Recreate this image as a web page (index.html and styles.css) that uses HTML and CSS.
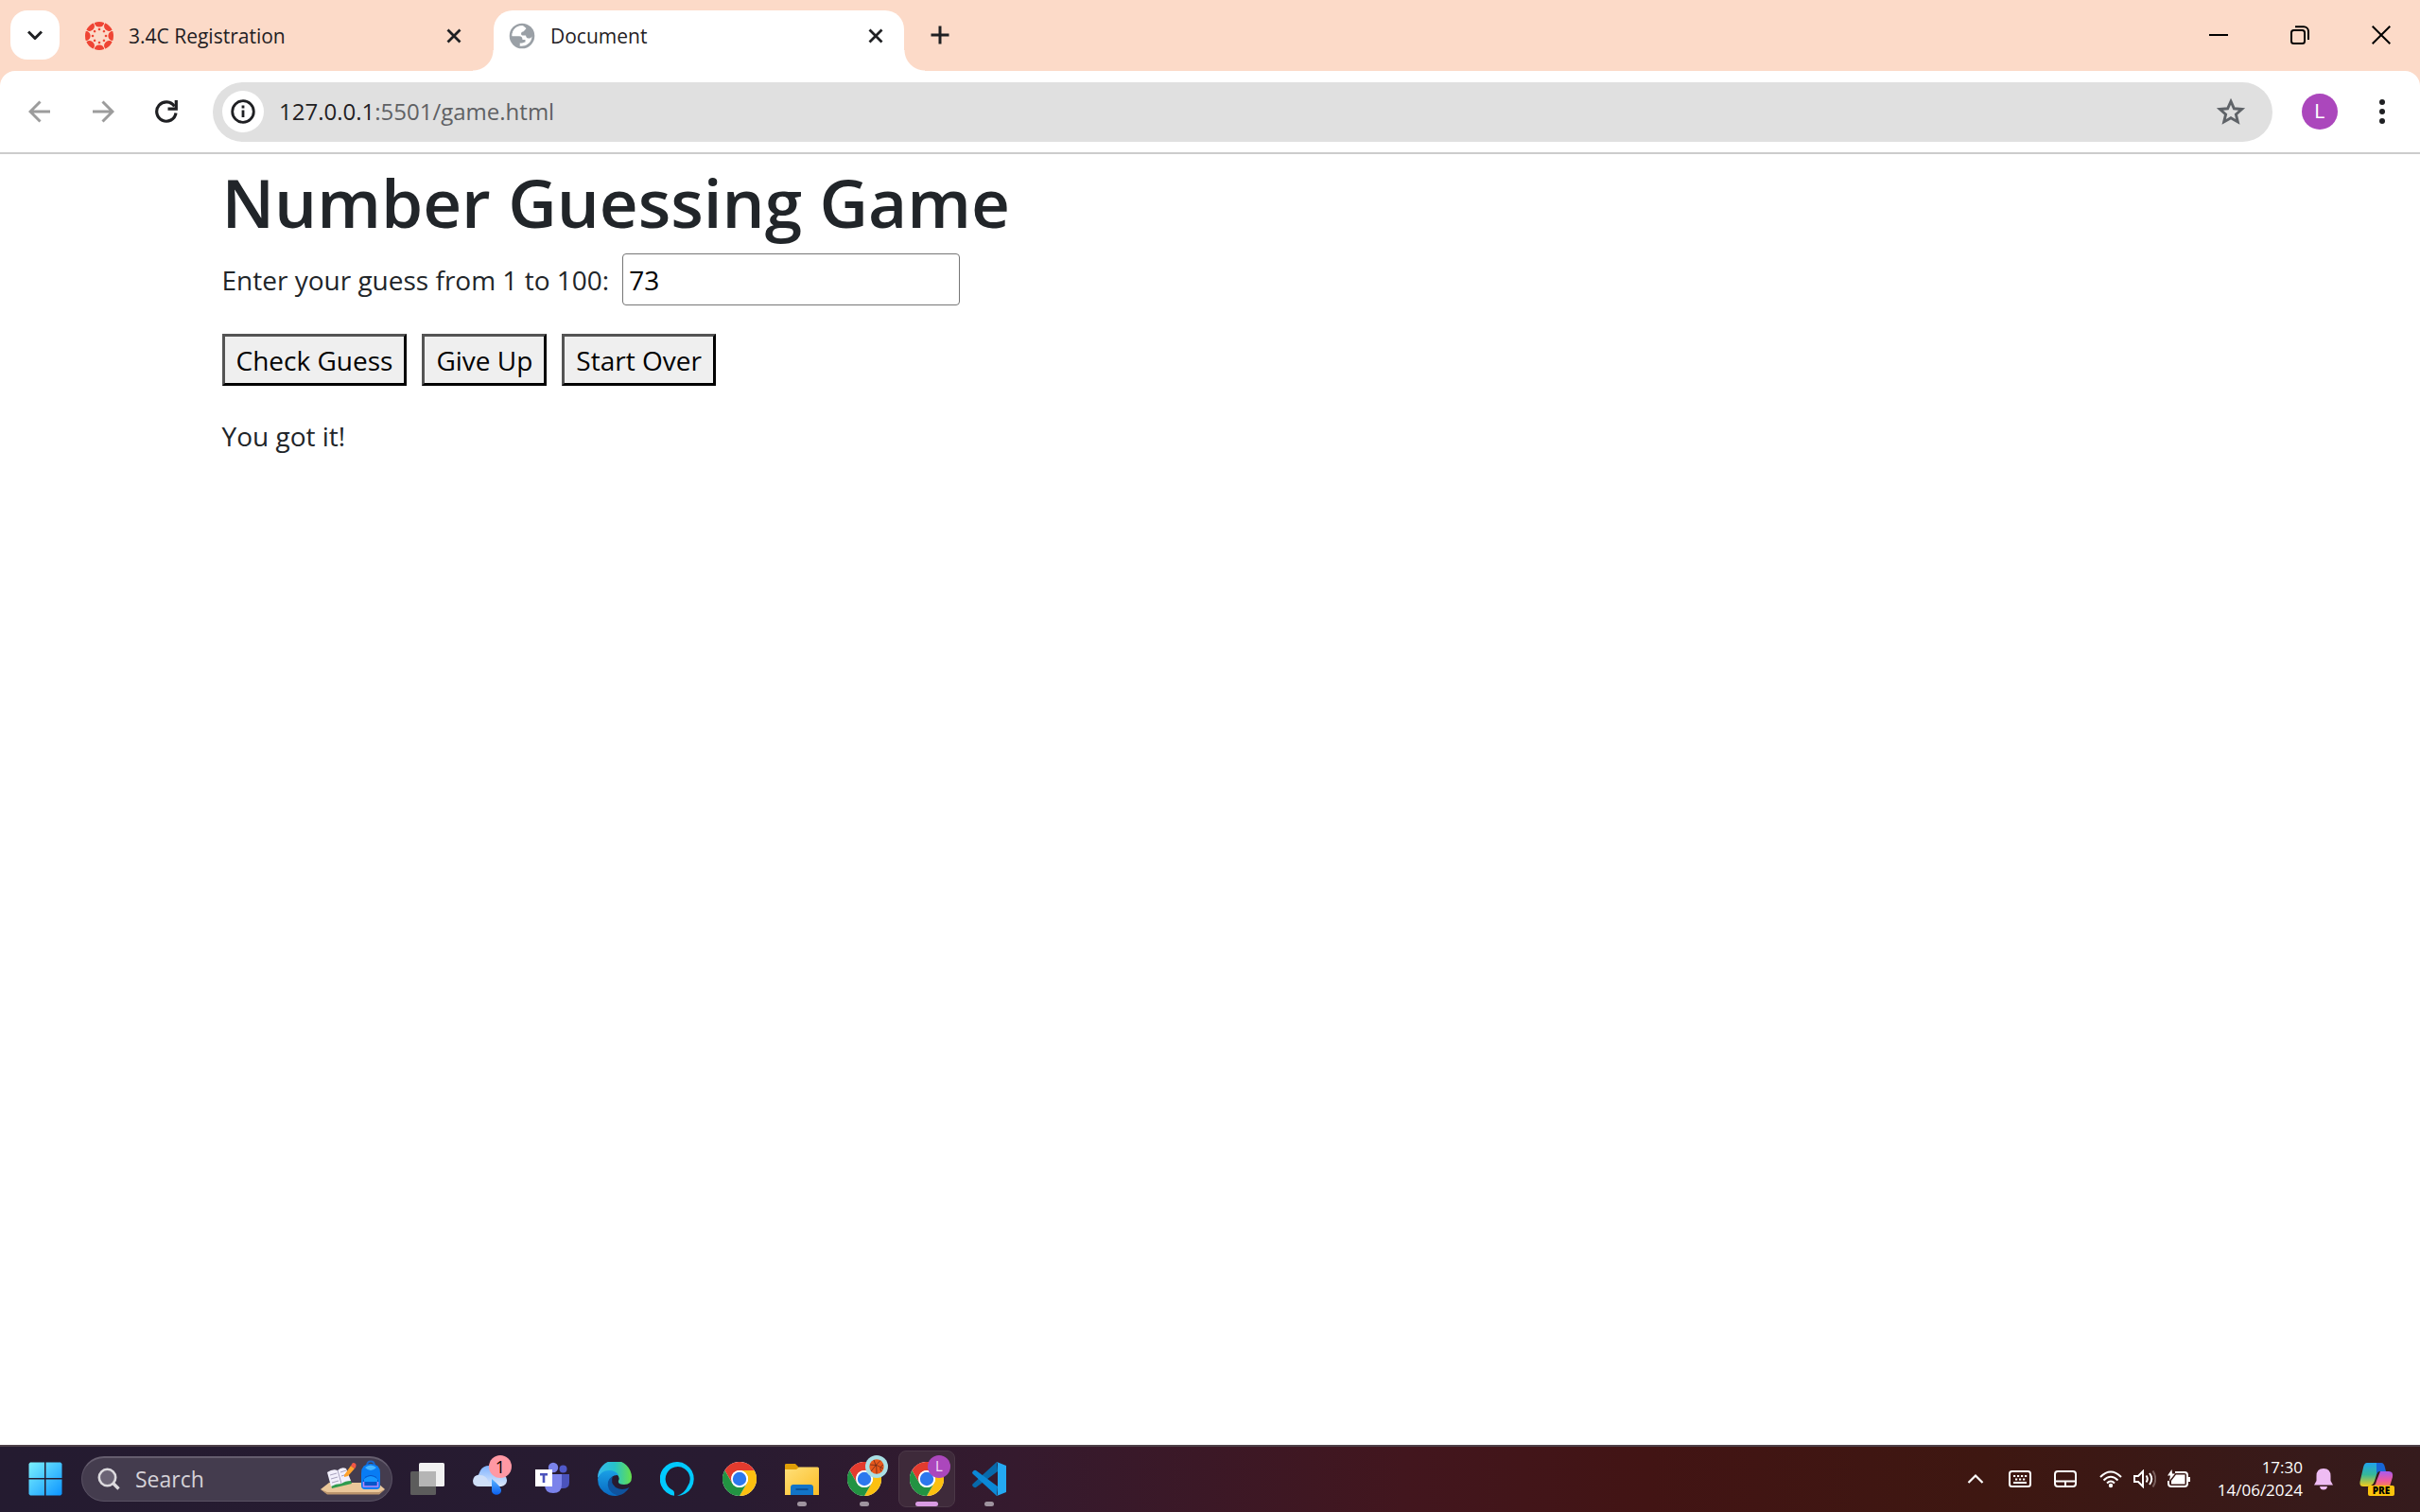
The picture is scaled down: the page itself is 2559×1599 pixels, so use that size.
FILE: index.html
```html
<!DOCTYPE html>
<html lang="en">
<head>
<meta charset="utf-8">
<title>Document</title>
<link rel="stylesheet" href="styles.css">
</head>
<body>
<svg class="defs" width="0" height="0" aria-hidden="true">
  <defs>
    <symbol id="chrome" viewBox="0 0 48 48">
      <circle cx="24" cy="24" r="24" fill="#fff"/>
      <path d="M3.2 12A24 24 0 0 1 44.8 12H24A12 12 0 0 0 13.6 18L13.6 30Z" fill="#e33b2e"/>
      <path d="M44.8 12A24 24 0 0 1 24 48L34.4 30A12 12 0 0 0 34.4 18A12 12 0 0 0 24 12Z" fill="#fcc010"/>
      <path d="M24 48A24 24 0 0 1 3.2 12L13.6 30A12 12 0 0 0 24 36A12 12 0 0 0 34.4 30Z" fill="#229342"/>
      <circle cx="24" cy="24" r="12" fill="#fff"/>
      <circle cx="24" cy="24" r="9.6" fill="#2c78ee"/>
    </symbol>
    <symbol id="close" viewBox="0 0 16 16"><path d="M1.5 1.5l13 13M14.5 1.5l-13 13" stroke="currentColor" stroke-width="2.8" fill="none"/></symbol>
  </defs>
</svg>

<header class="browser">
  <nav class="tabstrip">
    <button class="tab-search" aria-label="Search tabs"><svg width="16" height="10" viewBox="0 0 16 10"><path d="M1 1.5l7 7 7-7" fill="none" stroke="currentColor" stroke-width="3"/></svg></button>
    <div class="tab">
      <svg width="30" height="30" viewBox="0 0 30 30" fill="#ef4534">
        <g id="q">
          <path d="M10 0.900A15 15 0 0 1 20 0.900A5 4.700 0 0 1 10 0.900Z"/>
          <path d="M10 0.900H20Q19 5 15 5T10 0.900Z"/>
          <circle cx="15" cy="8" r="1.300"/>
        </g>
        <use href="#q" transform="rotate(45 15 15)"/><use href="#q" transform="rotate(90 15 15)"/><use href="#q" transform="rotate(135 15 15)"/><use href="#q" transform="rotate(180 15 15)"/><use href="#q" transform="rotate(225 15 15)"/><use href="#q" transform="rotate(270 15 15)"/><use href="#q" transform="rotate(315 15 15)"/>
      </svg>
      <span class="tab-title">3.4C Registration</span>
      <button class="icon-button" aria-label="Close tab"><svg width="16" height="16"><use href="#close"/></svg></button>
    </div>
    <div class="tab tab-active">
      <svg width="28" height="28" viewBox="0 0 28 28"><circle cx="14" cy="14" r="13.300" fill="#9aa0a6"/><path d="M15.500 3.500C12.500 4.500 12 6.500 12 8C10 8.500 9 10 9.500 12C6.500 12 5 13 3.500 14C3.500 7 9 2.500 15.500 3.500Z" fill="#fff"/><path d="M3.500 14.200H11C13.500 14.200 14.500 15.800 14.500 18H17.500V20.500C15.500 21 14 22 11.500 21.500V24.500C16 25.500 24 23 24.500 14.500C23 17 22 16.500 20.500 16.500C19 16.500 18.500 15.500 18 13.500H14.500C12.500 13 12.500 10 15 9.500C16 9.400 16.500 8 18.500 6L15.500 3.500C9 2.500 3.500 7 3.500 14.200Z" fill="#fff"/><path d="M3.600 15H11C13 15.500 13.500 17 13.500 18.500H11.500V24.200C7 23.500 3.800 20 3.600 15Z" fill="#9aa0a6"/></svg>
      <span class="tab-title">Document</span>
      <button class="icon-button" aria-label="Close tab"><svg width="16" height="16"><use href="#close"/></svg></button>
    </div>
    <button class="icon-button new-tab" aria-label="New tab"><svg width="20" height="20" viewBox="0 0 20 20"><path d="M10 0.500v19M0.500 10h19" stroke="currentColor" stroke-width="3"/></svg></button>
    <div class="window-controls">
      <button class="icon-button" aria-label="Minimize"><svg width="20" height="20"><path d="M0 10h20" stroke="#000" stroke-width="2"/></svg></button>
      <button class="icon-button" aria-label="Restore"><svg width="20" height="20" viewBox="0 0 20 20" fill="none" stroke="#000" stroke-width="2"><rect x="1" y="5" width="14" height="14" rx="2.500"/><path d="M5 1.200H14A5 5 0 0 1 19 6.200V15"/></svg></button>
      <button class="icon-button" aria-label="Close"><svg width="20" height="20" viewBox="0 0 20 20"><path d="M0.700 0.700l18.600 18.600M19.300 0.700L0.700 19.300" stroke="#000" stroke-width="2"/></svg></button>
    </div>
  </nav>
  <div class="toolbar-wrap">
  <div class="toolbar">
    <button class="icon-button muted" aria-label="Back"><svg width="24" height="24" viewBox="0 0 24 24" fill="none" stroke="currentColor" stroke-width="3"><path d="M23 12H2.500M12.500 1.500L2 12l10.500 10.500"/></svg></button>
    <button class="icon-button muted" aria-label="Forward"><svg width="24" height="24" viewBox="0 0 24 24" fill="none" stroke="currentColor" stroke-width="3"><path d="M1 12h20.500M11.500 1.500L22 12 11.500 22.500"/></svg></button>
    <button class="icon-button" aria-label="Reload"><svg width="24" height="24" viewBox="0 0 24 24" fill="none" stroke="currentColor" stroke-width="3.200"><path d="M22 13.500A10.200 10.200 0 1 1 20.500 6.500"/><path d="M22.300 0V9.200H13.500"/></svg></button>
    <div class="omnibox">
      <button class="site-info" aria-label="View site information"><svg width="26" height="26" viewBox="0 0 26 26"><circle cx="13" cy="13" r="11.300" fill="none" stroke="currentColor" stroke-width="2.800"/><path d="M13 11.500v7.500M13 6.500v3" stroke="currentColor" stroke-width="2.800"/></svg></button>
      <div class="url" role="textbox" contenteditable="true" spellcheck="false" aria-label="Address"><span class="url-host">127.0.0.1</span>:5501/game.html</div>
      <button class="icon-button star" aria-label="Bookmark this tab"><svg width="32" height="30" viewBox="0 0 32 30"><path d="M16 4.200L19.400 11.800L27.600 12.500L21.400 17.900L23.300 25.900L16 21.700L8.700 25.900L10.600 17.900L4.400 12.500L12.600 11.800Z" fill="none" stroke="currentColor" stroke-width="2.900"/></svg></button>
    </div>
    <button class="avatar" aria-label="Profile">L</button>
    <button class="icon-button" aria-label="Menu"><svg width="8" height="28" viewBox="0 0 8 28" fill="currentColor"><circle cx="4" cy="4" r="3"/><circle cx="4" cy="14" r="3"/><circle cx="4" cy="24" r="3"/></svg></button>
  </div>
  </div>
</header>

<main class="page">
  <div class="container">
    <h1>Number Guessing Game</h1>
    <div class="field">
      <label for="guess">Enter your guess from 1 to 100:</label>
      <input id="guess" type="text" value="73">
    </div>
    <div class="actions">
      <button class="action">Check Guess</button>
      <button class="action">Give Up</button>
      <button class="action">Start Over</button>
    </div>
    <p class="result">You got it!</p>
  </div>
</main>

<footer class="taskbar">
  <button class="task start" aria-label="Start"><svg width="36" height="36" viewBox="0 0 36 36"><defs><linearGradient id="win" gradientUnits="userSpaceOnUse" x1="0" y1="0" x2="36" y2="36"><stop offset="0" stop-color="#7df3ff"/><stop offset="1" stop-color="#0a93ff"/></linearGradient></defs><path d="M2 0.500H17V17H0.500V2ZM18.500 0.500H34L35.500 2V17H18.500ZM0.500 18.500H17V35.500H2L0.500 34ZM18.500 18.500H35.500V34L34 35.500H18.500Z" fill="url(#win)"/></svg></button>
  <label class="search">
    <svg width="24" height="24" viewBox="0 0 24 24" fill="#6b6475" stroke="#dcdade" stroke-width="2.600"><circle cx="10.500" cy="10.500" r="8.700"/><path d="M17 17l5.500 5.500" stroke-width="3.400"/></svg>
    <input type="text" placeholder="Search" aria-label="Search">
    <svg width="68" height="40" viewBox="0 0 68 40">
      <path d="M0 31L9 24H60L68 31L62 36H7Z" fill="#eac79a"/><path d="M0 31L7 34H62L68 31L62 36.500H7Z" fill="#bb946c"/>
      <path d="M8 14L12 30L33 25L31 20Z" fill="#2f9b4e"/>
      <path d="M7 13Q13 9 18 11Q22 7 27 9L32 22Q26 22 22 25Q16 25 11 28Z" fill="#f2effb"/>
      <path d="M18 11L22 25M10 16l7-2M11 20l7-2M12 24l7-2M21 13l6-2M22 17l6-2" stroke="#a7a1bd" fill="none"/>
      <path d="M25 16L32 6L36 9L29 17L25 18Z" fill="#ffa22b"/><path d="M32 6L34 3Q39 3 37 8L36 9Z" fill="#f25645"/>
      <path d="M49 6Q49 1.500 53 1.500T57 6" stroke="#1c65c8" stroke-width="1.800" fill="none"/>
      <path d="M43 14Q43 4 53 4T63 14V27Q63 31 59 31H47Q43 31 43 27Z" fill="#087cf4"/><path d="M47 8Q53 3 59 8Q56 11 53 11T47 8Z" fill="#47b5ff"/>
      <path d="M45 22Q47 16 53 16T61 22V28H45Z" fill="#0754c9"/><path d="M46 20Q53 14 60 20V23H46Z" fill="#1597ff"/><path d="M45.500 23V28H60.500V23" fill="none" stroke="#b488fa" stroke-width="1.600"/>
    </svg>
  </label>
  <button class="task" aria-label="Task view"><svg width="36" height="36" viewBox="0 0 36 36"><rect x="0" y="10" width="27" height="25" rx="1.500" fill="#5c5c5c"/><rect x="9" y="1" width="27" height="25" rx="1.500" fill="#f1f1f1"/><path d="M9 10H27V26H10.500L9 24.500Z" fill="#b5b5b5"/></svg></button>
  <button class="task" aria-label="Weather"><svg width="36" height="36" viewBox="0 0 36 36"><defs><linearGradient id="cl" x2="0" y2="1"><stop stop-color="#7fb3ff"/><stop offset="1" stop-color="#dce8fb"/></linearGradient><linearGradient id="drop" x2="0" y2="1"><stop stop-color="#5cb5ff"/><stop offset="1" stop-color="#0a5ff0"/></linearGradient></defs><path d="M7 26A6.500 6.500 0 0 1 6 13.500Q9 3 19 4Q28 5 29 13A6.500 6.500 0 0 1 30 26Z" fill="url(#cl)"/><path d="M0 20Q1 13 7 14Q14 14 16 20L20 26H7Q0 26 0 20Z" fill="#cfdff8"/><path d="M20 18Q31 27 30 31A5.200 5.200 0 0 1 20 31Z" fill="url(#drop)"/></svg><span class="badge">1</span></button>
  <button class="task" aria-label="Teams"><svg width="36" height="36" viewBox="0 0 36 36"><circle cx="29.500" cy="7.500" r="4" fill="#5059c9"/><path d="M25 13H36V22Q36 28 29 28H25Z" fill="#4b53bc"/><circle cx="19" cy="6" r="5.200" fill="#7b83eb"/><path d="M10 13H28V24Q28 33 19 33T10 24Z" fill="#7b83eb"/><rect x="0" y="8" width="18" height="18" fill="#fff"/><path d="M5 12H13V14.400H10.300V22H7.700V14.400H5Z" fill="#4b53bc"/></svg></button>
  <button class="task" aria-label="Edge"><svg width="36" height="36" viewBox="0 0 36 36"><defs><linearGradient id="eg"><stop stop-color="#35b7ef"/><stop offset=".5" stop-color="#27c3c9"/><stop offset="1" stop-color="#66e04c"/></linearGradient><linearGradient id="eb" x2="0" y2="1"><stop stop-color="#1aa0e6"/><stop offset="1" stop-color="#0868c0"/></linearGradient></defs><path d="M0 17A18 18 0 0 1 36 16Q36 24 28 24Q21 24 22 20Q24 16 20 13Q9 6 0 17Z" fill="url(#eg)"/><path d="M0 18Q3 9 12 9Q19 9 22 14Q14 13 12 22Q12 30 22 35.500Q18 36.500 12 35Q0 30 0 18Z" fill="url(#eb)"/><path d="M16 15Q8 20 12 29Q15 34 22 35.600Q29 34 33.500 27Q26 31 19 27Q13 22 16 15Z" fill="#0f539e"/></svg></button>
  <button class="task" aria-label="Alexa"><svg width="36" height="36" viewBox="0 0 36 36"><path d="M15 35.800A18 18 0 1 1 18 36Q26 33 29 26A13 13 0 1 0 13.500 30Q15 31 15 33Z" fill="#00caff"/></svg></button>
  <button class="task" aria-label="Chrome"><svg width="36" height="36"><use href="#chrome"/></svg></button>
  <button class="task running" aria-label="File Explorer"><svg width="36" height="36" viewBox="0 0 36 36"><defs><linearGradient id="fo" x2="1" y2="1"><stop stop-color="#ffe07a"/><stop offset="1" stop-color="#fbbd25"/></linearGradient></defs><path d="M0 3Q0 2 1.500 2H11L15 6V12H0Z" fill="#e09e07"/><path d="M0 8H12L15 5.500H34.500Q36 5.500 36 7V35H0Z" fill="url(#fo)"/><path d="M6 35V27Q6 24 9 24H27Q30 24 30 27V35Z" fill="#1274c7"/><path d="M11.500 29H24.500" stroke="#0a4b8d" stroke-width="1.600"/></svg></button>
  <button class="task running" aria-label="Chrome, first profile"><svg width="36" height="36"><use href="#chrome"/></svg><span class="badge badge-ball"><svg width="16" height="16" viewBox="0 0 16 16"><circle cx="8" cy="8" r="7.700" fill="#e8581c"/><path d="M1 6Q8 5 15 10M5 1Q9 8 8 15.500M12 1.500Q8 5 2 13M13 13Q10 9 15 6" fill="none" stroke="#6b2b1b" stroke-width=".8"/></svg></span></button>
  <button class="task running current" aria-label="Chrome, current profile"><svg width="36" height="36"><use href="#chrome"/></svg><span class="badge badge-user">L</span></button>
  <button class="task running" aria-label="Visual Studio Code"><svg width="36" height="36" viewBox="0 0 36 36"><path d="M26 0L27 10L4 27Q2 28 0.500 25.500Q-0.500 24 1 23Z" fill="#0769ab"/><path d="M0.500 10.500Q2 8 4 9L27 26L26 36L1 13Q-0.500 12 0.500 10.500Z" fill="#0b88d6"/><path d="M26 0L36 4V32L26 36Q27 35 27 33V3Q27 1 26 0Z" fill="#24a9f2"/></svg></button>

  <div class="tray">
    <button class="icon-button tray-more" aria-label="Show hidden icons"><svg width="18" height="12" viewBox="0 0 18 12"><path d="M1.500 10L9 2.500L16.500 10" fill="none" stroke="#fff" stroke-width="2.200"/></svg></button>
    <button class="icon-button" aria-label="Touch keyboard"><svg width="24" height="20" viewBox="0 0 24 20"><rect x="1" y="2" width="22" height="16" rx="2.500" fill="none" stroke="#fff" stroke-width="2"/><path d="M5 7h2.200M9 7h2.200M13 7h2.200M17 7h2.200M7 10.500h2.200M11 10.500h2.200M15 10.500h2.200M5 14h14" stroke="#fff" stroke-width="2"/></svg></button>
    <button class="icon-button" aria-label="Virtual touchpad"><svg width="24" height="20" viewBox="0 0 24 20"><path d="M4 2H20Q23 2 23 5V15Q23 18 20 18H4Q1 18 1 15V5Q1 2 4 2ZM1 12.500H23M12 12.500V18" fill="none" stroke="#fff" stroke-width="2"/></svg></button>
    <button class="quick" aria-label="Network, volume and battery">
      <svg width="24" height="20" viewBox="0 0 24 20"><path d="M1 8Q12-3 23 8M4.500 11.500Q12 4 19.500 11.500M8 14.500Q12 10.500 16 14.500" fill="none" stroke="#fff" stroke-width="2"/><circle cx="12" cy="17" r="2.200" fill="#fff"/></svg>
      <svg width="24" height="20" viewBox="0 0 24 20" fill="none" stroke="#fff" stroke-width="2"><path d="M1 7H5L10 2V18L5 13H1ZM13.500 6.500Q16 10 13.500 13.500M17 4Q21.500 10 17 16"/><path d="M20.500 1.500Q26 10 20.500 18.500" stroke="#795f5c"/></svg>
      <svg width="24" height="20" viewBox="0 0 24 20"><path d="M8 3H18Q21 3 21 6V15Q21 18 18 18H4Q1 18 1 15V12" fill="none" stroke="#fff" stroke-width="2"/><path d="M21.500 8H24V13H21.500ZM9 5.500H18.500V15.500H4V12Z" fill="#fff"/><path d="M4.500 0L0 6.500H3L2 12L8 4.500H5Z" fill="#fff"/></svg>
    </button>
    <button class="clock"><span>17:30</span><span>14/06/2024</span></button>
    <button class="icon-button bell" aria-label="Notifications"><svg width="20" height="24" viewBox="0 0 20 24"><path d="M10 1Q17.500 1 17.500 9V14L20 18.500H0L2.500 14V9Q2.500 1 10 1ZM6 20H14Q13.500 23.500 10 23.500T6 20Z" fill="#eebcf3"/></svg></button>
    <button class="copilot" aria-label="Copilot"><svg width="36" height="36" viewBox="0 0 36 36"><defs><linearGradient id="ca" x2="0" y2="1"><stop stop-color="#20a3ec"/><stop offset=".5" stop-color="#35b89a"/><stop offset="1" stop-color="#f5cb19"/></linearGradient><linearGradient id="cb" x2="0" y2="1"><stop stop-color="#a85bef"/><stop offset=".6" stop-color="#ef5a9c"/><stop offset="1" stop-color="#fa8450"/></linearGradient></defs><path d="M8 1H22L16 20Q14 26 8 26H4Q-1 26 1 19L4 6Q5 1 8 1Z" fill="url(#ca)"/><path d="M18 1H23Q26 1 27 6L28 10H22Q19 10 18 13Z" fill="#1766d6"/><path d="M22 10H31Q36 10 35 16L32 26H12Q17 26 18 20Z" fill="url(#cb)"/></svg><span class="pre">PRE</span></button>
  </div>
</footer>
</body>
</html>
```
FILE: styles.css
```css
* { box-sizing: border-box; }

body {
  margin: 0;
  min-height: 100vh;
  display: flex;
  flex-direction: column;
  background: #fff;
  color: #212529;
  font-family: "Segoe UI", "Open Sans", "Noto Sans", sans-serif;
}

button, input { font: inherit; color: inherit; }
svg { display: block; flex: none; }
.defs { position: absolute; }

.icon-button {
  display: flex;
  flex: none;
  padding: 0;
  border: 0;
  background: none;
}

/* Browser frame */
.browser { color: #1f2023; }

.tabstrip {
  display: flex;
  align-items: flex-end;
  height: 75px;
  background: #fcdac8;
}

.tab-search {
  display: flex;
  align-items: center;
  justify-content: center;
  width: 52px;
  height: 52px;
  margin: 0 11px 12px;
  padding: 0;
  border: 0;
  border-radius: 18px;
  background: #fff;
}

.tab {
  position: relative;
  display: flex;
  align-items: center;
  gap: 16px;
  width: 434px;
  height: 64px;
  padding: 0 22px 10px 16px;
  font-size: 21px;
  line-height: 32px;
}

.tab:not(.tab-active) { width: 448px; padding-right: 34px; }
.tab-title { flex: 1; }

.tab-active {
  background: #fff;
  border-radius: 20px 20px 0 0;
}

.tab-active::before,
.tab-active::after {
  content: "";
  position: absolute;
  bottom: 0;
  width: 22px;
  height: 22px;
}

.tab-active::before {
  right: 100%;
  background: radial-gradient(circle at 0 0, transparent 21px, #fff 22px);
}

.tab-active::after {
  left: 100%;
  background: radial-gradient(circle at 100% 0, transparent 21px, #fff 22px);
}

.new-tab { margin: 0 0 28px 28px; }

.window-controls {
  display: flex;
  gap: 66px;
  margin: 0 31px 28px auto;
}

.toolbar-wrap { background: #fcdac8; }

.toolbar {
  display: flex;
  align-items: center;
  gap: 43px;
  height: 88px;
  padding: 0 36px 0 30px;
  border-bottom: 2px solid #ccc;
  border-radius: 16px 16px 0 0;
  background: #fff;
}

.muted { color: #9c9c9c; }

.omnibox {
  display: flex;
  flex: 1;
  align-items: center;
  height: 63px;
  margin: 0 -12px 0 -6px;
  padding: 0 28px 0 10px;
  border-radius: 32px;
  background: #e0e0e0;
}

.site-info {
  display: flex;
  align-items: center;
  justify-content: center;
  width: 44px;
  height: 44px;
  padding: 0;
  border: 0;
  border-radius: 50%;
  background: #fff;
}

.url {
  flex: 1;
  margin-left: 16px;
  color: #5f6164;
  font-size: 24px;
  line-height: 36px;
  outline: 0;
}

.url-host { color: #1f2023; }
.star { color: #5f6368; }

.avatar {
  width: 38px;
  height: 38px;
  padding: 0;
  border: 0;
  border-radius: 50%;
  background: #ab47bc;
  color: #fff;
  font: 20px/38px Roboto, sans-serif;
}

/* Game page */
.page { flex: 1; }

.container {
  max-width: 2134px;
  margin: 0 auto;
  padding: 0 22px;
  font-size: 28px;
  line-height: 46px;
}

h1 {
  margin: 0;
  padding-top: 6px;
  font-size: 71px;
  font-weight: 600;
  line-height: 90px;
  margin-bottom: 9px;
}

.field {
  display: flex;
  align-items: center;
  gap: 14px;
  margin-bottom: 30px;
}

.field input {
  width: 357px;
  height: 55px;
  padding: 0 6px;
  border: 1px solid #767676;
  border-radius: 4px;
  background: #fff;
  color: #000;
}

.actions {
  display: flex;
  gap: 16px;
  margin-bottom: 30px;
}

.action {
  height: 55px;
  padding: 0 12px;
  border: 3px outset #000;
  background: #efefef;
  color: #000;
}

.result { margin: 0; }

/* Taskbar */
.taskbar {
  display: flex;
  align-items: center;
  height: 71px;
  padding: 0 28px 2px 30px;
  border-top: 2px solid #4e4148;
  background: linear-gradient(90deg, #241b30, #281b31 30%, #351a2e 42%, #42161e 58%, #421414 68%, #3e1711 82%, #351b1d);
  color: #fff;
}

.task {
  position: relative;
  display: flex;
  flex: none;
  align-items: center;
  justify-content: center;
  width: 60px;
  height: 60px;
  margin: 0 3px;
  padding: 0;
  border: 1px solid transparent;
  border-radius: 8px;
  background: none;
}

.start { width: 36px; margin: 0 20px 0 0; }

.search {
  display: flex;
  align-items: center;
  gap: 16px;
  width: 329px;
  height: 48px;
  margin-right: 4px;
  padding: 0 7px 0 16px;
  border: 1px solid #595163;
  border-top: 2px solid #655d6e;
  border-radius: 24px;
  background: #443c4e;
}

.search input {
  flex: 1;
  min-width: 0;
  padding: 0;
  border: 0;
  outline: 0;
  background: none;
  font-size: 23px;
  line-height: 36px;
}

.search input::placeholder { color: #d5d2d8; opacity: 1; }

.running::after {
  content: "";
  position: absolute;
  bottom: 0;
  left: 50%;
  width: 10px;
  height: 5px;
  margin-left: -5px;
  border-radius: 3px;
  background: #9f949f;
}

.current { border-color: #4b3847; background: #3e2a3a; }

.current::after {
  width: 24px;
  margin-left: -12px;
  background: #d99be3;
}

.badge {
  position: absolute;
  top: 4px;
  right: 6px;
  width: 24px;
  height: 24px;
  border-radius: 50%;
  background: #ff98a4;
  color: #000;
  font-size: 18px;
  line-height: 24px;
  text-align: center;
}

.badge-ball,
.badge-user { right: 4px; }

.badge-ball {
  display: flex;
  align-items: center;
  justify-content: center;
  background: #a9dfe5;
}

.badge-user {
  background: #ab47bc;
  color: #f3d9f7;
  font-family: Roboto, sans-serif;
  font-size: 14px;
}

.tray {
  display: flex;
  align-items: center;
  margin-left: auto;
  gap: 24px;
}

.tray-more { margin-right: 2px; }

.quick {
  display: flex;
  gap: 12px;
  padding: 0;
  border: 0;
  background: none;
}

.clock {
  display: flex;
  flex-direction: column;
  align-items: flex-end;
  min-width: 95px;
  padding: 0;
  border: 0;
  background: none;
  font-size: 17px;
  line-height: 24px;
}

.bell { margin-left: -12px; }

.copilot {
  position: relative;
  margin-left: 4px;
  padding: 0;
  border: 0;
  background: none;
}

.pre {
  position: absolute;
  right: -1px;
  bottom: 0;
  width: 28px;
  border-radius: 2px;
  background: #fbc30c;
  color: #000;
  font-size: 10px;
  font-weight: 800;
  line-height: 11px;
  text-align: center;
}
```
